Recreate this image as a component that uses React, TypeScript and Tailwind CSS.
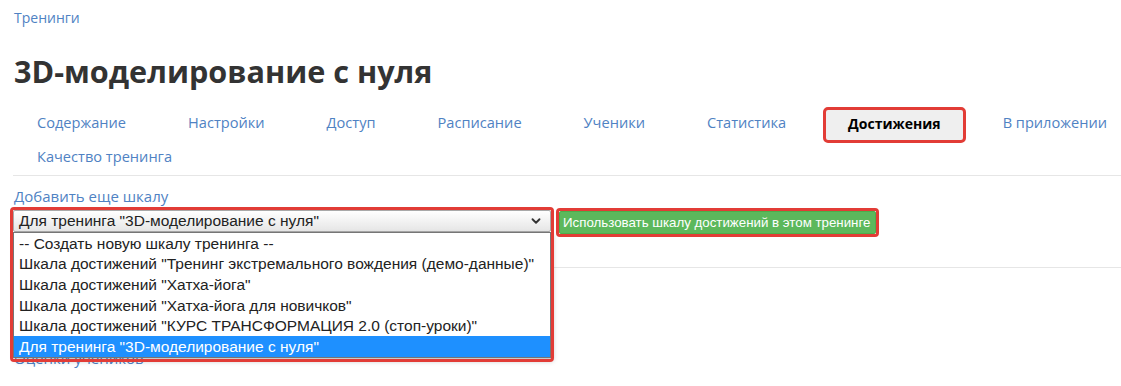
import { ChevronDown } from "lucide-react";

const TABS_TOP = [
  "Содержание",
  "Настройки",
  "Доступ",
  "Расписание",
  "Ученики",
  "Статистика",
  "Достижения",
  "В приложении",
];

const OPTIONS = [
  "-- Создать новую шкалу тренинга --",
  'Шкала достижений "Тренинг экстремального вождения (демо-данные)"',
  'Шкала достижений "Хатха-йога"',
  'Шкала достижений "Хатха-йога для новичков"',
  'Шкала достижений "КУРС ТРАНСФОРМАЦИЯ 2.0 (стоп-уроки)"',
  'Для тренинга "3D-моделирование с нуля"',
];

const ACTIVE = "Достижения";

function Tab({ label }: { label: string }) {
  const active = label === ACTIVE;
  return (
    <li className="relative flex h-[34px] items-center whitespace-nowrap px-6">
      {active && (
        <span className="absolute -left-px -right-px top-px -bottom-[3px] rounded-[5px] border-[3px] border-[#e23c36] bg-[#efefef]" />
      )}
      <span
        className={
          active
            ? "relative text-[14px] font-bold text-black"
            : "relative text-[14.6px] text-[#4f82c3]"
        }
      >
        {label}
      </span>
    </li>
  );
}

export default function App() {
  return (
    <div className="h-[386px] w-[1121px] overflow-hidden bg-white pl-[14px] font-['Open_Sans',sans-serif] text-[#333]">
      <div className="pt-2 text-[14px] leading-5 text-[#4f82c3]">Тренинги</div>

      <h1 className="mt-[23px] text-[30.6px] font-bold leading-10 text-[#333]">
        3D-моделирование с нуля
      </h1>

      <ul className="-ml-px mt-[15px] flex gap-x-[14px]">
        {TABS_TOP.map((t) => (
          <Tab key={t} label={t} />
        ))}
      </ul>
      <ul className="-ml-px flex">
        <Tab label="Качество тренинга" />
      </ul>

      <div className="-ml-px mt-px border-t border-[#e6e6e6]" />

      <div className="mt-[10px] text-[15px] leading-5 text-[#4f82c3]">
        Добавить еще шкалу
      </div>

      <div className="-ml-px mt-1 flex items-start">
        <div className="relative">
          <span className="pointer-events-none absolute -left-[3px] -top-[3px] z-20 h-[155px] w-[544px] rounded-[4px] border-[3px] border-[#e23c36]" />
          <div className="flex h-[22px] w-[538px] items-center justify-between rounded-[2px] border border-[#a9a9a9] bg-gradient-to-b from-white to-[#e6e6e6] pl-[5px] pr-[7px] font-['Liberation_Sans',sans-serif] text-[15.5px] text-[#222]">
            <span>Для тренинга "3D-моделирование с нуля"</span>
            <ChevronDown size={14} strokeWidth={3.2} className="text-[#333]" />
          </div>
          <ul className="absolute left-0 top-[22px] z-10 w-[538px] border border-[#767676] bg-white font-['Liberation_Sans',sans-serif] text-[15.5px] text-[#222] shadow-[2px_3px_5px_rgba(0,0,0,0.25)]">
            {OPTIONS.map((o, i) => (
              <li
                key={o}
                className={
                  i === OPTIONS.length - 1
                    ? "flex h-[20.7px] items-center whitespace-nowrap bg-[#1e90ff] pl-[5px] text-white"
                    : "flex h-[20.7px] items-center whitespace-nowrap pl-[5px]"
                }
              >
                {o}
              </li>
            ))}
          </ul>
        </div>

        <div className="relative ml-[8px] mt-px">
          <span className="absolute -inset-[3px] rounded-[4px] border-[3px] border-[#e23c36]" />
          <button
            type="button"
            className="flex h-[23px] w-[317px] items-center whitespace-nowrap rounded-[2px] border border-[#4cae4c] bg-[#5cb85c] pl-[3px] font-['Liberation_Sans',sans-serif] text-[13.3px] text-white"
          >
            Использовать шкалу достижений в этом тренинге
          </button>
        </div>
      </div>

      <div className="-ml-px mt-[33px] border-t border-[#e6e6e6]" />

      <div className="mt-[80px] text-[15px] leading-5 text-[#4f82c3]">
        Оценки учеников
      </div>
    </div>
  );
}
